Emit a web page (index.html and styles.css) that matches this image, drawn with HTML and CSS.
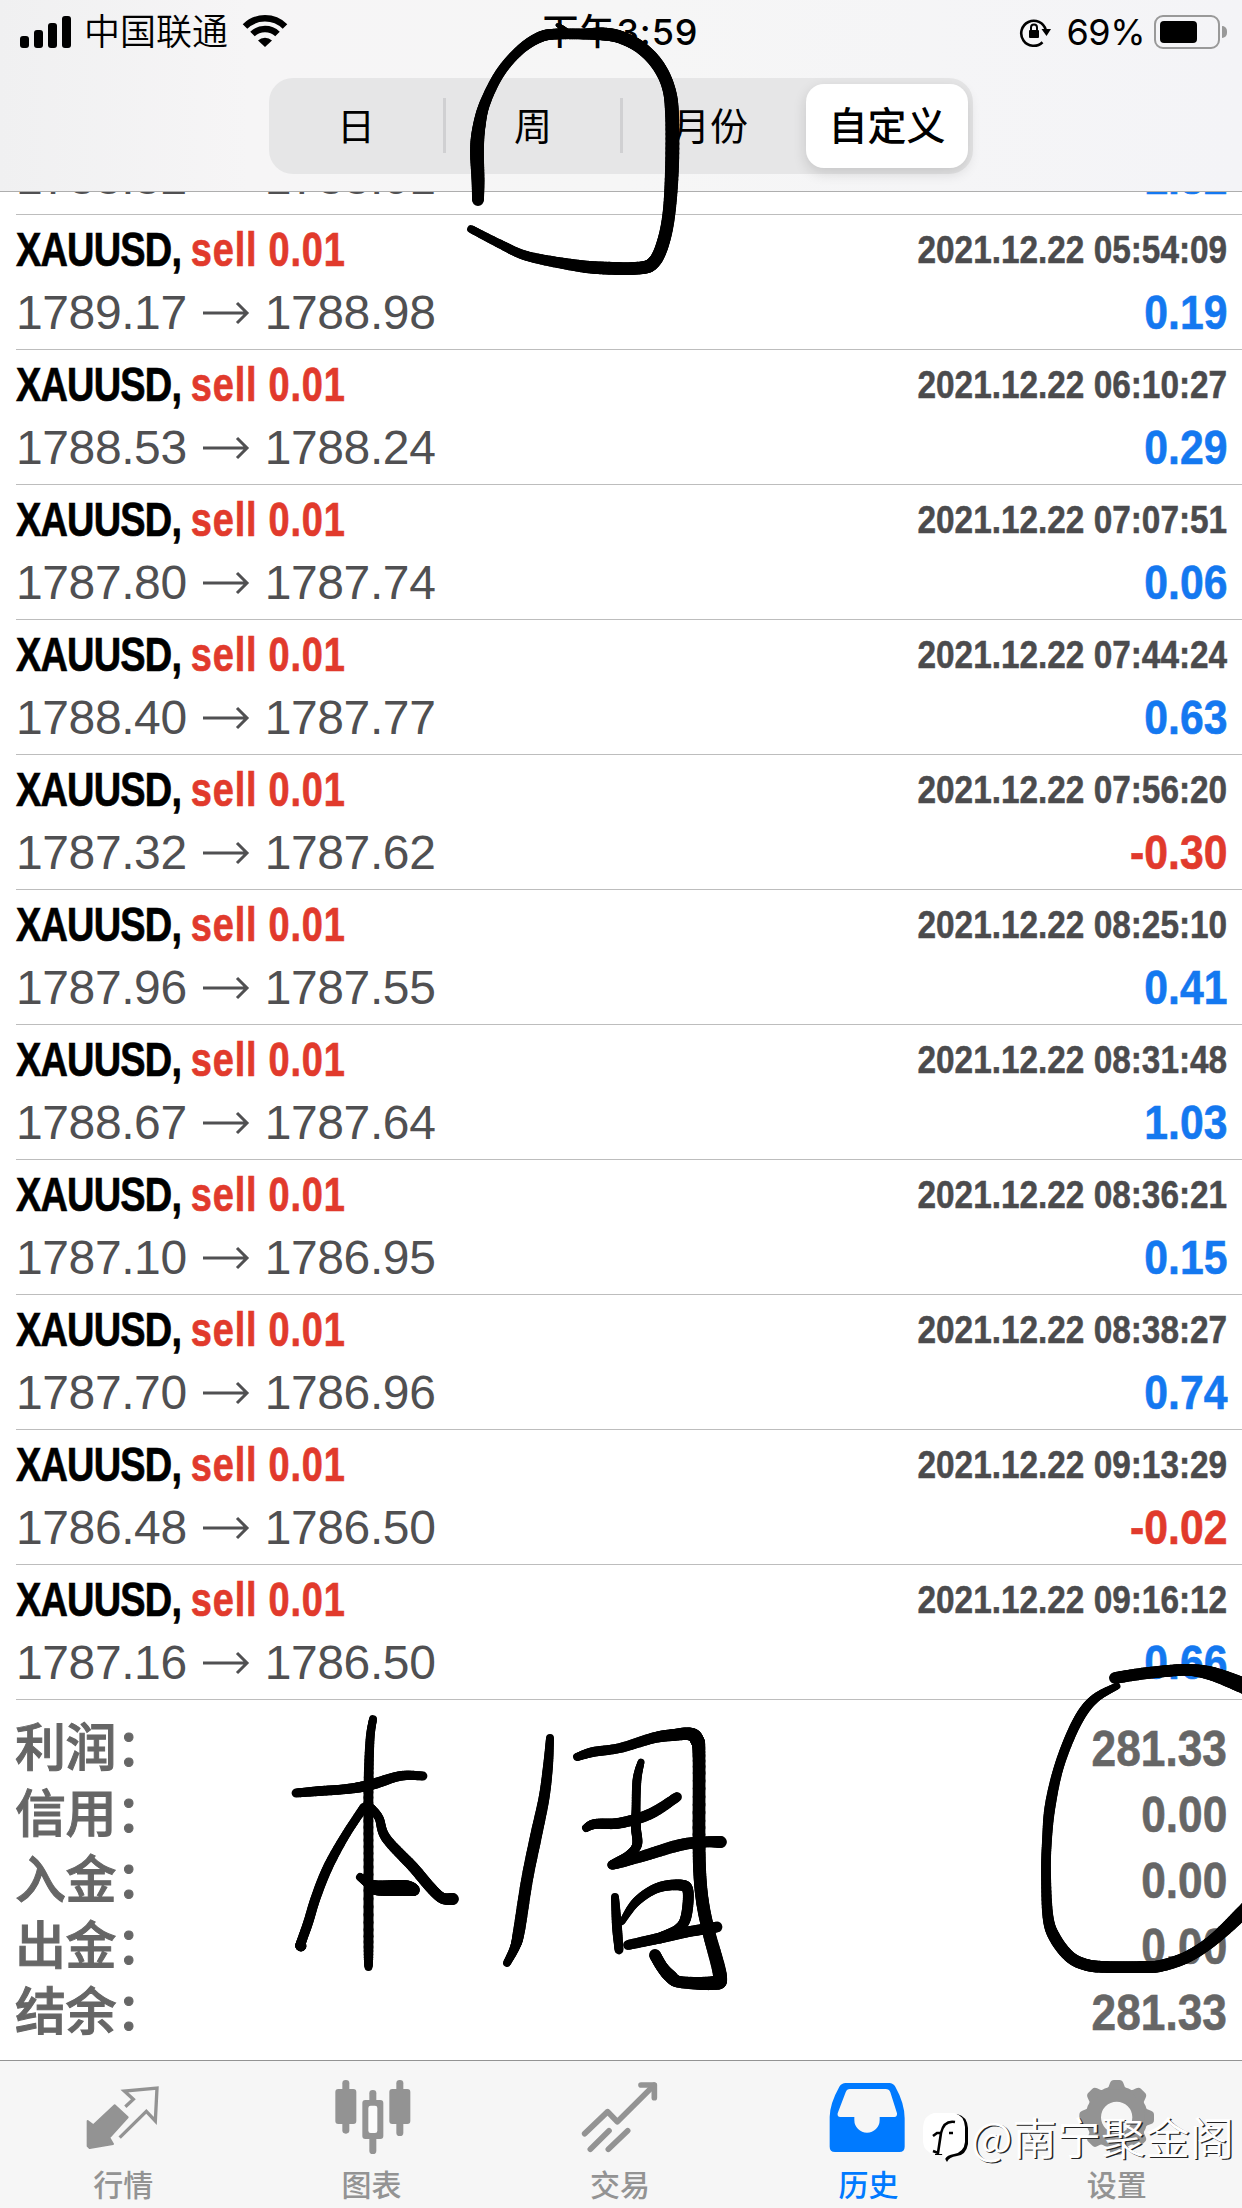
FILE: index.html
```html
<!DOCTYPE html>
<html lang="zh-CN">

<head>
    <meta charset="UTF-8">
    <meta name="viewport" content="width=device-width, initial-scale=1.0">
    <title>历史</title>
    <link rel="stylesheet" href="styles.css">
</head>

<body>
    <header class="header">
        <div class="status-bar">
            <div class="status-left">
                <svg class="signal" width="52" height="33" viewBox="0 0 52 33">
                    <rect x="0" y="20" width="9" height="12" rx="3" />
                    <rect x="14" y="14" width="9" height="18" rx="3" />
                    <rect x="28" y="7" width="9" height="25" rx="3" />
                    <rect x="42" y="0" width="9" height="32" rx="3" />
                </svg>
                <span class="carrier">中国联通</span>
                <svg class="wifi" width="46" height="34" viewBox="0 0 46 34">
                    <path d="M3 12.500a28.500 28.500 0 0 1 40 0" fill="none" stroke="#000" stroke-width="6.500" />
                    <path d="M10.500 20a18 18 0 0 1 25 0" fill="none" stroke="#000" stroke-width="6.500" />
                    <path d="M16 26.500a10 10 0 0 1 14 0l-7 6.500z" />
                </svg>
            </div>
            <div class="status-time">下午<span>3:59</span></div>
            <div class="status-right">
                <svg width="34" height="32" viewBox="0 0 34 32">
                    <path d="M23.500 26.200A12.500 12.500 0 1 1 26.800 14" fill="none" stroke="#000" stroke-width="2.600" />
                    <path d="M22.500 13h9.500l-4.500 7z" />
                    <rect x="10" y="14" width="10" height="8" rx="1" />
                    <path d="M12 14.500v-3a3 3 0 0 1 6 0v3" fill="none" stroke="#000" stroke-width="2" />
                </svg>
                <span class="percent">69%</span>
                <div class="battery"><div class="level"></div></div>
                <div class="battery-cap"></div>
            </div>
        </div>
        <div class="segments">
            <div class="segment">日</div>
            <div class="segment line">周</div>
            <div class="segment line">月份</div>
            <div class="segment active">自定义</div>
        </div>
    </header>

    <main class="history">
        <div id="deals"></div>
    </main>

    <section class="totals">
        <div class="total"><span>利润：</span><b>281.33</b></div>
        <div class="total"><span>信用：</span><b>0.00</b></div>
        <div class="total"><span>入金：</span><b>0.00</b></div>
        <div class="total"><span>出金：</span><b>0.00</b></div>
        <div class="total"><span>结余：</span><b>281.33</b></div>
    </section>

    <nav class="tabs">
        <div class="tab">
            <svg viewBox="0 0 240 240">
                <path d="M11 138L28 151L92 91L131 127L76 188L87 207L17 219L11 213Z" fill="currentColor" stroke="currentColor" stroke-width="6" stroke-linejoin="round" />
                <path d="M124 95L148 73L121 48L219 39L214 138L187 109L107 188" fill="none" stroke="currentColor" stroke-width="10" />
            </svg>
            <span>行情</span>
        </div>
        <div class="tab">
            <svg viewBox="0 0 240 240" fill="currentColor">
                <rect x="28" y="15" width="21" height="161" rx="10" />
                <rect x="7" y="42" width="63" height="105" rx="9" />
                <rect x="190" y="15" width="21" height="168" rx="10" />
                <rect x="169" y="42" width="63" height="105" rx="9" />
                <rect x="109" y="45" width="21" height="192" rx="10" />
                <rect x="88" y="75" width="63" height="117" rx="9" />
                <rect x="106" y="92" width="27" height="82" rx="7" fill="#fcfcfc" />
            </svg>
            <span>图表</span>
        </div>
        <div class="tab">
            <svg viewBox="0 0 240 240" fill="none" stroke="currentColor" stroke-width="17" stroke-linejoin="round">
                <path d="M11 176L80 110L109 140L219 31" stroke-linecap="round" />
                <path d="M180 30H220V68" stroke-linecap="round" />
                <path d="M28 223L84 167M82 223L140 167" stroke-linecap="round" />
            </svg>
            <span>交易</span>
        </div>
        <div class="tab selected">
            <svg viewBox="0 0 240 240" fill="currentColor">
                <path fill-rule="evenodd" d="M2 215V125Q3 85 31 35Q38 24 50 24H181Q192 24 199 35Q227 85 227 130V215Q227 231 211 231H18Q2 231 2 215ZM62 42H170Q180 42 184 52L204 115Q205 126 196 126H152V135A38 38 0 0 1 76 135V126H34Q24 126 26 115L50 52Q54 42 62 42Z" />
            </svg>
            <span>历史</span>
        </div>
        <div class="tab">
            <svg viewBox="0 0 240 240" fill="currentColor">
                <circle cx="116" cy="127" r="70" fill="none" stroke="currentColor" stroke-width="46" />
                <g id="gear">
                    <path id="tooth" d="M84 44Q93 38 96 24Q99 15 108 15H124Q133 15 136 24Q139 38 148 44Z" />
                    <use href="#tooth" transform="rotate(45 116 127)" />
                    <use href="#tooth" transform="rotate(90 116 127)" />
                    <use href="#tooth" transform="rotate(135 116 127)" />
                </g>
                <use href="#gear" transform="rotate(180 116 127)" />
            </svg>
            <span>设置</span>
        </div>
        <div class="watermark">
            <svg width="48" height="52" viewBox="0 0 48 52">
                <path d="M12 2H34Q44 4 45 16V32Q43 43 34 44Q26 45 24 50Q21 46 22 43H12Z" fill="#000" transform="translate(1 0)" />
                <path d="M12 1H32Q42 3 43 15V30Q42 40 32 42Q25 43 23 47Q20 43 20 42H12Q2 40 1 30V15Q2 3 12 1Z" fill="#fff" />
                <path d="M11 24L15 21H20M33 10Q22 8 19 21L16 41L11 39M27 21H31" fill="none" stroke="#000" stroke-width="2.600" />
            </svg>
            <span>@南宁聚金阁</span>
        </div>
    </nav>

    <canvas id="ink" width="1242" height="2208"></canvas>

    <script>
        const deals = [
            ['1788.82', '1788.01', '2021.12.22 05:40:12', '1.82'],
            ['1789.17', '1788.98', '2021.12.22 05:54:09', '0.19'],
            ['1788.53', '1788.24', '2021.12.22 06:10:27', '0.29'],
            ['1787.80', '1787.74', '2021.12.22 07:07:51', '0.06'],
            ['1788.40', '1787.77', '2021.12.22 07:44:24', '0.63'],
            ['1787.32', '1787.62', '2021.12.22 07:56:20', '-0.30'],
            ['1787.96', '1787.55', '2021.12.22 08:25:10', '0.41'],
            ['1788.67', '1787.64', '2021.12.22 08:31:48', '1.03'],
            ['1787.10', '1786.95', '2021.12.22 08:36:21', '0.15'],
            ['1787.70', '1786.96', '2021.12.22 08:38:27', '0.74'],
            ['1786.48', '1786.50', '2021.12.22 09:13:29', '-0.02'],
            ['1787.16', '1786.50', '2021.12.22 09:16:12', '0.66']
        ];

        document.getElementById('deals').innerHTML = deals.map(([open, close, time, profit]) => `
            <div class="deal">
                <div class="deal-row">
                    <div class="symbol">XAUUSD, <span>sell 0.01</span></div>
                    <div class="time">${time}</div>
                </div>
                <div class="deal-row">
                    <div class="prices">
                        <span>${open}</span>
                        <svg width="48" height="24" viewBox="0 0 48 24"><path d="M1 12H45M35 2L45 12L35 22" /></svg>
                        <span>${close}</span>
                    </div>
                    <div class="profit ${profit < 0 ? 'loss' : ''}">${profit}</div>
                </div>
            </div>
        `).join('');

        // pen strokes: x, y, pen width
        const strokes = [
            // loop around the week tab
            [[478, 200, 11], [478, 180, 12], [477, 150, 13], [479, 127, 12], [485, 103, 10], [500, 73, 9], [520, 50, 9], [540, 37, 10], [557, 34, 10], [583, 34, 10], [603, 34, 12], [620, 37, 12], [640, 47, 12], [657, 64, 12], [668, 86, 12], [672, 113, 13], [672, 167, 13], [669, 213, 12], [663, 243, 12], [654, 262, 12], [640, 268, 12], [603, 268, 12], [573, 265, 11], [527, 256, 9], [500, 244, 8], [471, 229, 7]],
            [[557, 25, 2], [561, 27, 4], [567, 31, 4]],
            // 本
            [[373, 1719, 7], [370, 1740, 8], [368.5, 1787, 9], [368.5, 1860, 9], [368.5, 1947, 9], [368.5, 1967, 7]],
            [[296, 1793, 8], [320, 1791, 9], [347, 1789, 9], [370, 1785, 10], [400, 1776, 9], [423, 1776, 8]],
            [[364, 1807, 8], [345, 1836, 8], [328, 1867, 9], [316, 1897, 9], [308, 1923, 9], [301, 1943, 9], [301, 1946, 10]],
            [[371, 1808, 8], [379, 1818, 8], [386, 1838, 9], [413, 1867, 10], [430, 1887, 10], [442, 1898, 10], [453, 1899, 11]],
            [[360, 1877, 7], [371, 1885, 10], [378, 1888, 14], [405, 1888, 15], [414, 1890, 11]],
            // 周
            [[550, 1738, 7], [548, 1766, 9], [544, 1798, 10], [536, 1836, 11], [527, 1880, 11], [519, 1931, 11], [515, 1947, 9], [507, 1963, 7]],
            [[577, 1757, 7], [593, 1752, 9], [620, 1748, 9], [653, 1738, 10], [673, 1735, 11], [690, 1734, 12], [697, 1740, 13], [699, 1756, 12], [699, 1840, 12], [700, 1877, 12], [703, 1905, 12], [709, 1933, 12], [720, 1976, 13], [713, 1983, 13], [680, 1982, 11], [670, 1976, 12], [662, 1967, 11], [655, 1955, 11]],
            [[641, 1762, 6], [637, 1780, 8], [636, 1810, 8], [636, 1828, 9], [637, 1845, 9], [628, 1855, 7], [612, 1865, 8], [640, 1857, 10], [680, 1845, 11], [705, 1842, 10], [721, 1842, 11]],
            [[586, 1828, 7], [595, 1824, 9], [620, 1823, 10], [650, 1814, 10], [677, 1797, 9]],
            [[615, 1897, 7], [617, 1927, 9], [619, 1950, 8]],
            [[622, 1922, 5], [636, 1902, 8], [657, 1888, 9], [680, 1885, 10], [688, 1891, 10], [686, 1917, 10], [678, 1929, 9], [660, 1938, 10]],
            [[628, 1945, 9], [660, 1938, 10], [687, 1932, 10], [717, 1927, 10]],
            // loop around the totals
            [[1115, 1678, 11], [1140, 1674, 11], [1167, 1671, 11], [1190, 1670, 11], [1213, 1674, 13], [1242, 1685, 15], [1262, 1694, 15]],
            [[1117, 1686, 6], [1097, 1697, 8], [1083, 1712, 9], [1070, 1737, 9], [1058, 1770, 9], [1050, 1807, 10], [1047, 1840, 9], [1046, 1873, 9], [1048, 1917, 10], [1055, 1938, 11], [1070, 1957, 11], [1087, 1965, 11], [1107, 1967, 11], [1140, 1967, 11], [1160, 1966, 11], [1187, 1957, 11], [1213, 1940, 11], [1242, 1913, 13], [1260, 1894, 13]]
        ];

        const ctx = document.getElementById('ink').getContext('2d');
        ctx.lineCap = 'round';

        function mix(a, b, c, d, t) {
            return 0.5 * (2 * b + (c - a) * t + (2 * a - 5 * b + 4 * c - d) * t * t + (3 * b - a - 3 * c + d) * t * t * t);
        }

        strokes.forEach(points => {
            let last = points[0];
            for (let i = 0; i < points.length - 1; i++) {
                const p = [points[i - 1] || points[i], points[i], points[i + 1], points[i + 2] || points[i + 1]];
                for (let s = 1; s <= 12; s++) {
                    const next = [0, 1, 2].map(k => mix(p[0][k], p[1][k], p[2][k], p[3][k], s / 12));
                    ctx.lineWidth = next[2] + 0.8;
                    ctx.beginPath();
                    ctx.moveTo(last[0], last[1]);
                    ctx.lineTo(next[0], next[1]);
                    ctx.stroke();
                    last = next;
                }
            }
        });
    </script>
</body>

</html>
```

FILE: styles.css
```css
* {
    box-sizing: border-box;
}

body {
    position: relative;
    display: flex;
    flex-direction: column;
    width: 1242px;
    height: 2208px;
    margin: 0;
    overflow: hidden;
    background: #fff;
    font-family: "Liberation Sans", "Noto Sans CJK SC", sans-serif;
}

.header {
    height: 192px;
    flex: none;
    background: linear-gradient(90deg, #f0f0f1, #f6f5f6 20%, #f6f6f6 50%, #f4f4f7);
    border-bottom: 1px solid #aeaeae;
}

.status-bar {
    display: grid;
    grid-template-columns: 1fr auto 1fr;
    height: 62px;
    padding: 0 15px 0 20px;
    font-family: Inter, "Noto Sans CJK SC", sans-serif;
    font-size: 36px;
    line-height: 64px;
}

.status-left,
.status-right {
    display: flex;
    align-items: center;
}

.status-right {
    justify-content: flex-end;
}

.carrier {
    margin-left: 12px;
    font-weight: 350;
}

.wifi {
    margin-left: 14px;
    margin-top: -3px;
}

.status-time {
    margin-left: -6px;
    font-weight: 500;
    letter-spacing: 0.9px;
}

.percent {
    margin: 0 9px 0 14px;
    letter-spacing: -0.5px;
}

.battery {
    width: 66px;
    height: 34px;
    padding: 4px;
    border: 2px solid #999;
    border-radius: 9px;
}

.level {
    width: 37px;
    height: 22px;
    border-radius: 4px;
    background: #000;
}

.battery-cap {
    width: 5px;
    height: 12px;
    margin-left: 2px;
    border-radius: 0 6px 6px 0;
    background: #999;
}

.segments {
    display: grid;
    grid-template-columns: repeat(3, 177px) 162px;
    width: 704px;
    height: 96px;
    margin: 16px 0 0 269px;
    padding: 6px 5px 6px 0;
    border-radius: 24px;
    background: #e6e6e7;
}

.segment {
    position: relative;
    font-size: 38px;
    line-height: 86px;
    height: 84px;
    text-align: center;
    padding-right: 3px;
}

.segment.line::before {
    content: "";
    position: absolute;
    left: -3px;
    top: 14px;
    width: 3px;
    height: 55px;
    background: #d0d0d2;
}

.segment.active {
    padding: 0;
    margin-left: 6px;
    margin-right: -6px;
    border-radius: 18px;
    background: #fff;
    box-shadow: 0 5px 14px rgba(0, 0, 0, 0.14);
    font-size: 39px;
    font-weight: 500;
}

.history {
    height: 1508px;
    flex: none;
    overflow: hidden;
}

#deals {
    margin-top: -112px;
}

.deal {
    height: 135px;
    margin-left: 16px;
    padding-right: 15px;
    border-bottom: 1px solid #bdbdbd;
}

.deal-row {
    display: flex;
    justify-content: space-between;
    height: 63px;
    line-height: 70px;
}

.symbol {
    font-size: 48px;
    font-weight: bold;
    letter-spacing: -1px;
    -webkit-text-stroke: 0.7px;
    transform: scaleX(0.79);
    transform-origin: left;
}

.symbol span {
    color: #e13a2c;
    letter-spacing: 1px;
}

.time {
    font-size: 39px;
    font-weight: bold;
    line-height: 69px;
    color: #4b4b4d;
    -webkit-text-stroke: 0.5px;
    transform: scaleX(0.855);
    transform-origin: right;
}

.prices {
    display: flex;
    align-items: center;
    height: 70px;
    font-size: 48px;
    letter-spacing: -0.4px;
    color: #505052;
}

.prices svg {
    margin: 0 15px;
    fill: none;
    stroke: #505052;
    stroke-width: 3;
}

.profit {
    font-size: 48px;
    font-weight: bold;
    color: #1478f0;
    -webkit-text-stroke: 0.6px;
    transform: scaleX(0.89);
    transform-origin: right;
}

.profit.loss {
    color: #e13a2c;
}

.totals {
    height: 360px;
    flex: none;
    padding: 16px 15px 0 15px;
    color: #666;
}

.total {
    display: flex;
    justify-content: space-between;
    height: 66px;
    font-size: 51px;
    font-weight: 500;
    line-height: 66px;
}

.total span {
    letter-spacing: -0.5px;
    -webkit-text-stroke: 1px;
}

.total b {
    font-size: 50px;
    -webkit-text-stroke: 0.6px;
    transform: scaleX(0.885);
    transform-origin: right;
}

.tabs {
    position: relative;
    display: grid;
    grid-template-columns: repeat(5, 1fr);
    height: 148px;
    border-top: 1px solid #939393;
    background: #f6f6f6;
}

.tab {
    display: flex;
    flex-direction: column;
    align-items: center;
    padding-top: 14px;
    font-size: 30px;
    line-height: 36px;
    color: #939393;
}

.tab svg {
    width: 80px;
    height: 80px;
    margin-bottom: 13px;
    overflow: visible;
}

.tab span {
    margin-right: 2px;
    font-weight: 500;
}

.tab.selected {
    color: #007aff;
}

/* author mark lies over the last tab */
.watermark {
    position: absolute;
    right: 8px;
    top: 43px;
    display: flex;
    align-items: center;
    gap: 1px;
    font-family: "Noto Sans CJK SC", sans-serif;
    font-size: 44.3px;
    line-height: 64px;
    font-weight: 350;
    color: #fff;
    text-shadow: 1.5px 1px 0 #222;
}

.watermark svg {
    margin-top: 4px;
}

#ink {
    position: absolute;
    left: 0;
    top: 0;
    pointer-events: none;
}
```
